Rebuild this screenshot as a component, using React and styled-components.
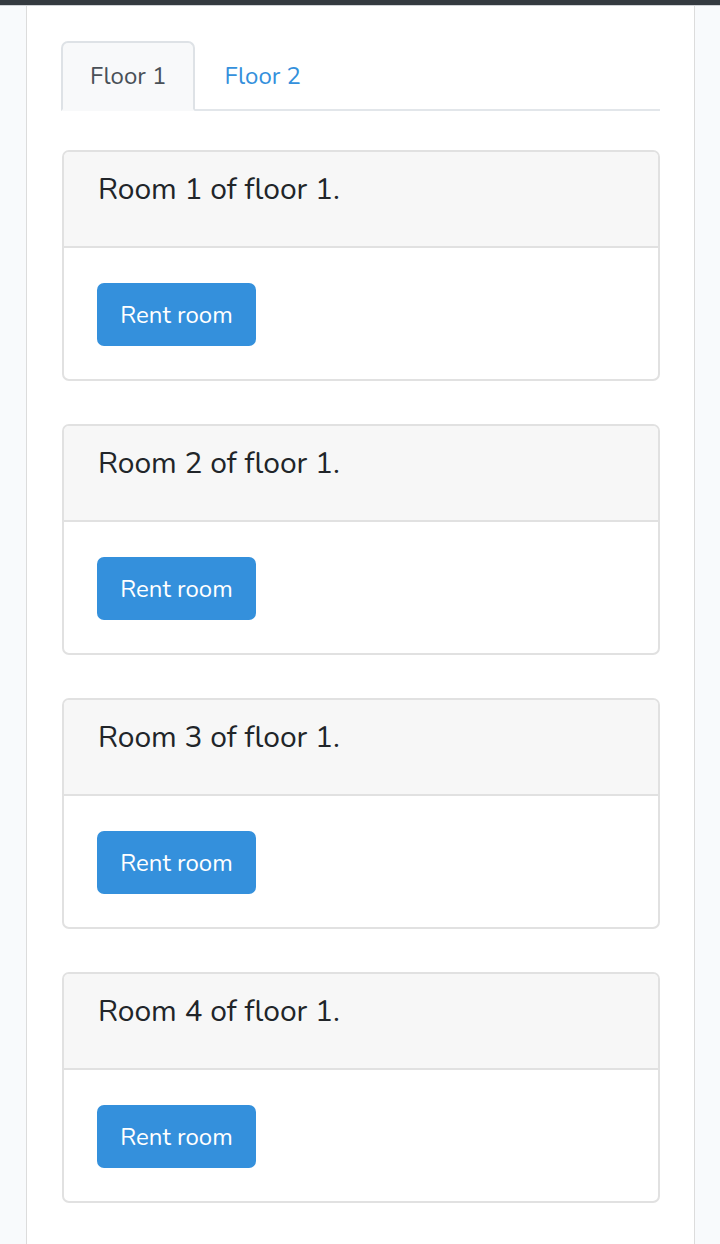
import React, { useState } from 'react'
import styled, { createGlobalStyle } from 'styled-components'

const GlobalStyle = createGlobalStyle`
  html, body {
    margin: 0;
    padding: 0;
    background: #f8fafc;
    font-family: Nunito, Lato, "Open Sans", sans-serif;
    color: #212529;
  }
`

const rooms = [1, 2, 3, 4]

export default function App() {
  const [floor, setFloor] = useState(1)

  return (
    <>
      <GlobalStyle />
      <TopBar />
      <Page>
        <Panel>
          <Tabs>
            {[1, 2].map((f) => (
              <Tab key={f} active={f === floor} onClick={() => setFloor(f)}>
                Floor {f}
              </Tab>
            ))}
          </Tabs>
          <CardList>
            {rooms.map((r) => (
              <Card key={r}>
                <CardHeader>Room {r} of floor {floor}.</CardHeader>
                <CardBody>
                  <Button>Rent room</Button>
                </CardBody>
              </Card>
            ))}
          </CardList>
        </Panel>
      </Page>
    </>
  )
}

const TopBar = styled.div`
  height: 5px;
  background-color: #343a40;
  border-bottom: 1px solid #cfd2d6;
`

const Page = styled.div`
  padding: 0 25px 0 26px;
  min-height: 1238px;
`

const Panel = styled.div`
  background: #fff;
  border-left: 1px solid #dcdcdc;
  border-right: 1px solid #dcdcdc;
  padding: 35px 34px 40px 34px;
  min-height: 1238px;
  box-sizing: border-box;
`

const Tabs = styled.div`
  display: flex;
  border-bottom: 2px solid #e2e6ea;
`

const Tab = styled.button`
  font-family: inherit;
  font-size: 24px;
  line-height: 38px;
  padding: 14px 27px;
  margin-bottom: -2px;
  background: ${(p) => (p.active ? '#f8f9fa' : 'transparent')};
  color: ${(p) => (p.active ? '#495057' : '#3490dc')};
  border: 2px solid ${(p) => (p.active ? '#dee2e6' : 'transparent')};
  border-bottom-color: ${(p) => (p.active ? '#f8f9fa' : 'transparent')};
  border-radius: 7px 7px 0 0;
  cursor: pointer;
`

const CardList = styled.div`
  display: flex;
  flex-direction: column;
  gap: 43px;
  margin-top: 39px;
`

const Card = styled.div`
  border: 2px solid #e1e1e1;
  border-radius: 7px;
  overflow: hidden;
  margin-left: 1px;
`

const CardHeader = styled.div`
  background: #f7f7f7;
  border-bottom: 2px solid #e1e1e1;
  padding: 0 34px;
  height: 94px;
  line-height: 76px;
  font-size: 30px;
  color: #212529;
`

const CardBody = styled.div`
  padding: 35px 33px 33px 33px;
`

const Button = styled.button`
  font-family: inherit;
  font-size: 24px;
  color: #fff;
  background: #3490dc;
  border: none;
  border-radius: 7px;
  width: 159px;
  height: 63px;
  padding: 0;
  display: block;
  cursor: pointer;
`
